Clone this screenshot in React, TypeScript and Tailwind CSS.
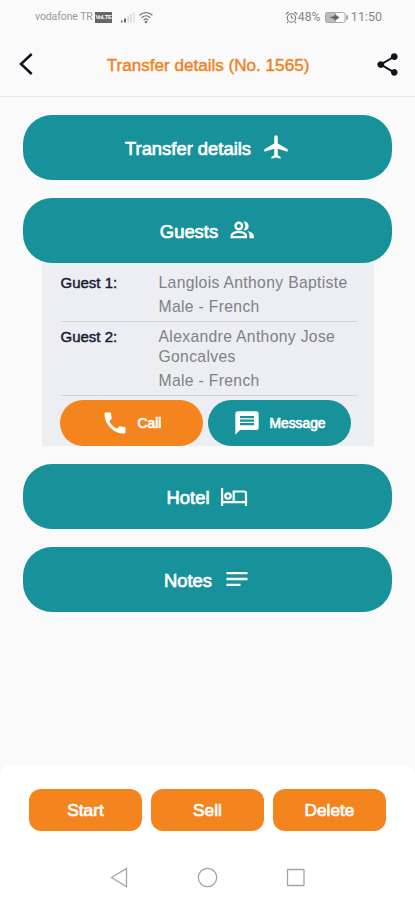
import React from "react";
import {
  MdLocalAirport,
  MdCall,
  MdMessage,
  MdNotes,
  MdShare,
} from "react-icons/md";

function StatusBar() {
  return (
    <div className="flex h-8 items-center pt-0.5 pl-[35px] pr-[33px] text-[#888]">
      <span className="w-[60px] whitespace-nowrap font-['Roboto',sans-serif] text-[10.500px] leading-4 tracking-[-0.1px] text-[#999]">vodafone TR</span>
      <span className="flex h-[11px] w-[17px] items-center justify-center bg-[#666] text-[6px] font-bold leading-none tracking-[-0.4px] text-white">VoLTE</span>
      <svg className="ml-[9px]" width="15" height="12" viewBox="0 0 15 12">
        <rect x="0" y="9.5" width="1.5" height="2" fill="#666" />
        <rect x="3" y="7.5" width="2" height="4" fill="#666" />
        <rect x="6.5" y="5" width="1.5" height="6.5" fill="#d5d5d5" />
        <rect x="9" y="3" width="1.5" height="8.500" fill="#d5d5d5" />
        <rect x="12" y="1" width="1.500" height="10.500" fill="#dedede" />
      </svg>
      <svg className="ml-[3px]" width="14" height="13" viewBox="0 0 14 13" fill="none" stroke="#777" strokeWidth="1.3">
        <path d="M.6 4.300C4 .7 10 .7 13.400 4.300M2.700 6.700C5.200 4.300 8.800 4.300 11.300 6.700M4.700 9C6 7.800 8 7.800 9.300 9" />
        <circle cx="7" cy="11" r=".7" fill="#777" />
      </svg>
      <svg className="ml-auto" width="13" height="13" viewBox="0 0 13 13" fill="none" stroke="#777" strokeWidth="1.1">
        <circle cx="6.500" cy="7" r="4.200" />
        <path d="M.8 3.200 3.500 1M12.200 3.200 9.500 1M6.500 4.600V7H8.500M3 11 2 12M10 11l1 1" />
      </svg>
      <span className="mr-[1px] w-[26px] whitespace-nowrap font-['Roboto',sans-serif] text-[12.200px] leading-4">48%</span>
      <svg width="23" height="11" viewBox="0 0 23 11" fill="none">
        <rect x=".5" y=".5" width="19.500" height="10" rx="1.500" stroke="#aaa" />
        <rect x="1" y="1" width="10" height="9" fill="#bbb" />
        <path d="M4 5.500 9.500 4V2l5 3.500-5 3.500V7z" fill="#666" />
        <path d="M22 3.200v4.600" stroke="#888" strokeWidth="1.5" />
      </svg>
      <span className="ml-[3px] whitespace-nowrap font-['Roboto',sans-serif] text-[12.500px] leading-4">11:50</span>
    </div>
  );
}

function GuestsIcon() {
  return (
    <svg width="26" height="26" viewBox="0 0 26 26" fill="none">
      <circle cx="9.800" cy="9" r="3.300" stroke="white" strokeWidth="2.400" />
      <path d="M2.700 20.200v-1.500c0-2.600 4.700-3.900 7.100-3.900s7.100 1.300 7.100 3.900v1.500z" stroke="white" strokeWidth="2.300" />
      <path d="M14.800 13.100c2.700.7 4.600-1.300 4.600-4.100s-1.900-4.800-4.600-4.100c1.100 1.200 1.700 2.600 1.700 4.100s-.6 2.900-1.700 4.100z" fill="white" stroke="white" strokeWidth=".4" />
      <path d="M18.500 14.200c1.300 1.100 2 2.500 2 4.200v2.900h4.300v-2.900c0-2.300-3.300-3.700-6.300-4.200z" fill="white" />
    </svg>
  );
}

function BedIcon() {
  return (
    <svg width="28" height="24" viewBox="0 0 28 24" fill="none" stroke="white" strokeWidth="2.200">
      <path d="M2.100 4v18M2.100 18.200h24M26 22V9.500a2 2 0 0 0-2-2H13.700v10.700" />
      <circle cx="8" cy="12" r="2.700" />
    </svg>
  );
}

function Section({ label, icon }: { label: string; icon: React.ReactNode }) {
  return (
    <button className="flex h-[65px] w-[369px] items-center justify-center gap-[11px] rounded-[29px] bg-[#17919a] text-[18.400px] leading-6 text-white [-webkit-text-stroke:0.7px_white]">
      <span className="whitespace-nowrap pt-[3px]">{label}</span>
      {icon}
    </button>
  );
}

function Guest({ n, name, info, height }: { n: number; name: string; info: string; height: string }) {
  return (
    <div className={"flex border-b border-[#cfd1d6] " + height}>
      <div className="w-[98px] text-[15px] leading-5 text-[#171a38] [-webkit-text-stroke:0.45px_#171a38]">Guest {n}:</div>
      <div className="w-[198px] whitespace-pre-line text-[15.700px] leading-5 tracking-[0.34px] text-[#808184]">
        <p>{name}</p>
        <p className="mt-1">{info}</p>
      </div>
    </div>
  );
}

function Action({ label }: { label: string }) {
  return (
    <button className="h-[42px] w-[113px] rounded-[12px] bg-[#f4841d] pt-[1px] text-[17.300px] leading-6 text-white [-webkit-text-stroke:0.7px_white]">
      {label}
    </button>
  );
}

export default function App() {
  return (
    <div className="flex h-[900px] w-[415px] flex-col overflow-hidden bg-[#fafafa] font-['Liberation_Sans',Arial,sans-serif]">
      <StatusBar />
      <header className="flex h-[65px] items-center justify-between border-b border-[#e8e8e8] pl-[19px] pr-[14px]">
        <svg width="14" height="24" viewBox="0 0 14 24" fill="none" stroke="#10101f" strokeWidth="2.500">
          <path d="M12.700 2 2 12l10.700 10" />
        </svg>
        <h1 className="ml-[9px] whitespace-nowrap pt-[3px] text-[17.100px] leading-6 text-[#ed8423] [-webkit-text-stroke:0.45px_#ed8423]">
          Transfer details (No. 1565)
        </h1>
        <MdShare size={27} color="#10101f" />
      </header>

      <main className="flex flex-1 flex-col items-center pt-[17.500px]">
        <Section label="Transfer details" icon={<MdLocalAirport size={28} />} />
        <div className="h-[18px]" />
        <Section label="Guests" icon={<GuestsIcon />} />
        <div className="h-[183px] w-[332px] bg-[#eceef1] pl-[18px]">
          <div className="w-[297px] pt-[10px] pl-[1px]">
            <Guest n={1} name="Langlois Anthony Baptiste" info="Male - French" height="h-[49px]" />
            <div className="pt-[5px]">
              <Guest n={2} name={"Alexandre Anthony Jose\nGoncalves"} info="Male - French" height="h-[69px]" />
            </div>
          </div>
          <div className="mt-[4px] flex gap-[5px] text-[13.800px] leading-5 text-white [-webkit-text-stroke:0.7px_white]">
            <button className="flex h-[46px] w-[143px] items-center justify-center gap-[9px] rounded-[23px] bg-[#f4841d]">
              <MdCall size={28} />
              <span className="pt-[2px]">Call</span>
            </button>
            <button className="flex h-[46px] w-[143px] items-center justify-center gap-[9px] rounded-[23px] bg-[#17919a]">
              <MdMessage size={28} />
              <span className="pt-[2px]">Message</span>
            </button>
          </div>
        </div>
        <div className="h-[18px]" />
        <Section label="Hotel" icon={<BedIcon />} />
        <div className="h-[18px]" />
        <Section label="Notes" icon={<MdNotes size={28} />} />
      </main>

      <footer className="rounded-t-[10px] bg-white">
        <div className="flex h-[89px] items-center justify-center gap-[9px]">
          <Action label="Start" />
          <Action label="Sell" />
          <Action label="Delete" />
        </div>
        <nav className="flex h-[46px] items-start pl-[110px] pt-[12px]">
          <svg width="197" height="23" viewBox="0 0 197 23" fill="none" stroke="#a5a5a5" strokeWidth="1.300">
            <path d="M1.500 11.500 16.500 2.500v18z" />
            <circle cx="97.500" cy="11.500" r="9.200" />
            <rect x="177.500" y="3.500" width="16.500" height="16" rx=".5" />
          </svg>
        </nav>
      </footer>
    </div>
  );
}
